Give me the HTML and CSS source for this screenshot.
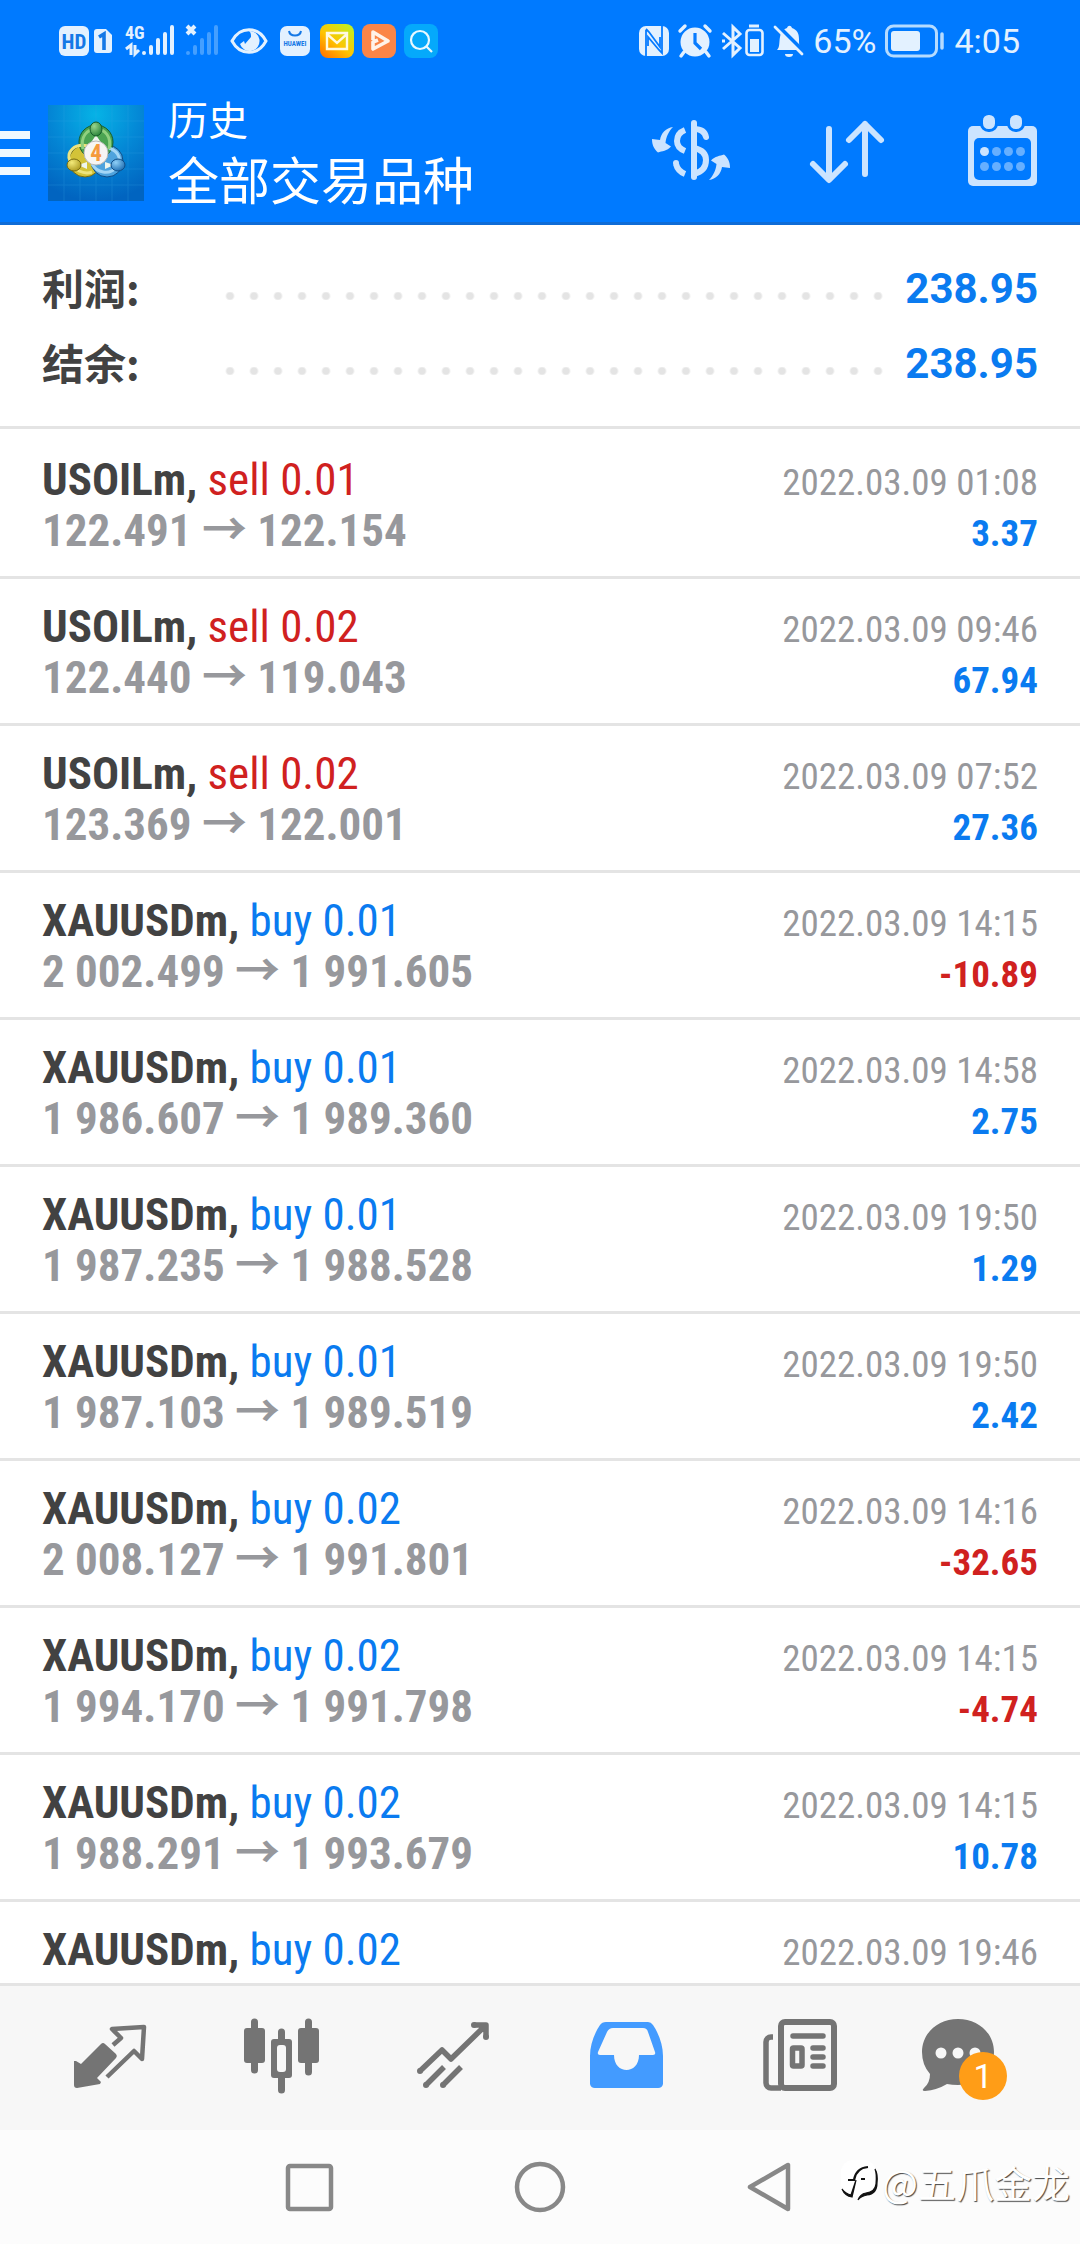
FILE: index.html
```html
<!DOCTYPE html>
<html lang="zh-CN">
<head>
  <meta charset="UTF-8" />
  <meta name="viewport" content="width=device-width, initial-scale=1.0"/>
  <title>历史</title>
  <link rel="stylesheet" href="styles.css">
</head>
<body>
  <div class="status-bar">
    <div class="status-left">
      <!-- HD + SIM 1 -->
      <svg width="56" height="36" viewBox="0 0 56 36">
        <rect x="0" y="3" width="30" height="30" rx="6" fill="#e3f1ff"/>
        <text x="15" y="26" class="svg-bold" font-size="21" text-anchor="middle" fill="#1478e6">HD</text>
        <path d="M38 6h9l6 6v15a3 3 0 0 1-3 3H38a3 3 0 0 1-3-3V9a3 3 0 0 1 3-3z" fill="#e3f1ff"/>
        <path d="M40 14l5-3v16" fill="none" stroke="#1478e6" stroke-width="3.6"/>
      </svg>
      <!-- signal 4G and the empty second SIM -->
      <svg width="95" height="36" viewBox="0 0 95 36">
        <text x="0" y="16" class="svg-bold" font-size="18" fill="#e3f1ff">4G</text>
        <path d="M1 26l5-4v10M10 22v9l4-4" fill="none" stroke="#e3f1ff" stroke-width="3"/>
        <g stroke="#e3f1ff" stroke-width="4" stroke-linecap="round">
          <path d="M19 30v0M26 24v6M33 17v13M40 11v19M47 4v26"/>
          <path d="M62 3l8 8M70 3l-8 8" stroke-linecap="butt"/>
        </g>
        <path d="M63 30v0M70 24v6M77 17v13M84 11v19M91 4v26" stroke="#459fff" stroke-width="4" stroke-linecap="round"/>
      </svg>
      <svg width="38" height="36" viewBox="0 0 38 36">
        <path d="M2 18C10 3 28 3 36 18C28 33 10 33 2 18z" fill="none" stroke="#e3f1ff" stroke-width="3"/>
        <path d="M19 8a10 10 0 1 1-9 13l4-3 1 3 6-7c0-3 0-4-2-6z" fill="#e3f1ff"/>
      </svg>
      <div class="status-apps">
        <svg width="34" height="36" viewBox="0 0 34 36">
          <rect x="2" y="3" width="30" height="30" rx="7" fill="#e3f1ff"/>
          <path d="M11 8c1 6 11 6 12 0" fill="none" stroke="#1478e6" stroke-width="2"/>
          <text x="17" y="23" class="svg-bold" font-size="7" text-anchor="middle" fill="#1478e6">HUAWEI</text>
        </svg>
        <svg width="34" height="36" viewBox="0 0 34 36">
          <defs>
            <linearGradient id="mail" x1="0" y1="1" x2="0.8" y2="0">
              <stop offset="0" stop-color="#ff6a00"/><stop offset="0.5" stop-color="#ffc400"/><stop offset="1" stop-color="#c3ee20"/>
            </linearGradient>
          </defs>
          <rect y="1" width="34" height="34" rx="8" fill="url(#mail)"/>
          <path d="M7 10h20v16H7zM7 11l10 9 10-9" fill="none" stroke="#fff9e0" stroke-width="2.4"/>
        </svg>
        <svg width="34" height="36" viewBox="0 0 34 36">
          <rect y="1" width="34" height="34" rx="8" fill="#fb8547"/>
          <path d="M11 17V9l15 9-15 8v-7l5-2" fill="none" stroke="#fff3ea" stroke-width="3.6" stroke-linejoin="round"/>
        </svg>
        <svg width="34" height="36" viewBox="0 0 34 36">
          <rect y="1" width="34" height="34" rx="8" fill="#05a9fb"/>
          <circle cx="16" cy="17" r="9" fill="none" stroke="#e8f8ff" stroke-width="2.2"/>
          <path d="M22 23l6 6" stroke="#e8f8ff" stroke-width="2.2"/>
        </svg>
      </div>
    </div>
    <div class="status-right">
      <svg width="30" height="36" viewBox="0 0 30 36">
        <rect x="0" y="3" width="30" height="30" rx="7" fill="#e3f1ff"/>
        <path d="M7 33V7M7 6l3 3 11 15V14M23 3v27l-3-3L9 14v9" fill="none" stroke="#067bff" stroke-width="1.8"/>
      </svg>
      <svg width="34" height="36" viewBox="0 0 34 36">
        <circle cx="17" cy="19" r="14.5" fill="#e3f1ff"/>
        <path d="M2 8l5-5M32 8l-5-5M6 29l-3 4M28 29l3 4" stroke="#e3f1ff" stroke-width="3.4" stroke-linecap="round"/>
        <path d="M17 10v10l6 6" fill="none" stroke="#067bff" stroke-width="3.2"/>
      </svg>
      <svg width="44" height="36" viewBox="0 0 44 36">
        <path d="M2 10l17 15-7 7V4l7 7L2 26M1 18h3" fill="none" stroke="#e3f1ff" stroke-width="3"/>
        <path d="M28 3h10" stroke="#e3f1ff" stroke-width="3"/>
        <rect x="25.500" y="7" width="16" height="25" rx="3" fill="none" stroke="#e3f1ff" stroke-width="2.6"/>
        <rect x="29" y="16" width="9" height="13" fill="#e3f1ff"/>
      </svg>
      <svg width="30" height="36" viewBox="0 0 30 36">
        <path d="M3 27c3-3 2-8 3-13 1-6 4-8 7-9 1-3 4-3 5 0 5 2 7 5 7 11 0 5 0 8 3 11z" fill="#e3f1ff"/>
        <path d="M11 31h8a4 3 0 0 1-8 0z" fill="#e3f1ff"/>
        <path d="M3 2l28 28" stroke="#007aff" stroke-width="4"/>
        <path d="M1 4l27 27" stroke="#e3f1ff" stroke-width="2.8" stroke-linecap="round"/>
      </svg>
      <span>65%</span>
      <svg width="60" height="36" viewBox="0 0 60 36">
        <rect x="1.500" y="3" width="50" height="30" rx="7" fill="none" stroke="#b5dbff" stroke-width="3"/>
        <rect x="6" y="8" width="29" height="20" rx="3" fill="#e3f1ff"/>
        <path d="M57 11v14" stroke="#b5dbff" stroke-width="3.500" stroke-linecap="round"/>
      </svg>
      <span>4:05</span>
    </div>
  </div>

  <header class="header">
    <button class="menu" aria-label="菜单"><i></i><i></i><i></i></button>
    <svg class="app-icon" width="96" height="96" viewBox="0 0 96 96">
      <defs>
        <radialGradient id="sky" cx="0.5" cy="0.1" r="0.9">
          <stop offset="0" stop-color="#06b3e6"/><stop offset="0.5" stop-color="#0488d6"/><stop offset="1" stop-color="#0164c0"/>
        </radialGradient>
        <radialGradient id="green" cx="0.35" cy="0.3" r="0.8"><stop offset="0" stop-color="#9bd68d"/><stop offset="1" stop-color="#1f7d33"/></radialGradient>
        <radialGradient id="yellow" cx="0.35" cy="0.3" r="0.8"><stop offset="0" stop-color="#f3ea7a"/><stop offset="1" stop-color="#a8951a"/></radialGradient>
        <radialGradient id="blue" cx="0.35" cy="0.3" r="0.8"><stop offset="0" stop-color="#8fd0f7"/><stop offset="1" stop-color="#1767ad"/></radialGradient>
      </defs>
      <rect width="96" height="96" fill="url(#sky)"/>
      <path d="M16 0v96M32 0v96M48 0v96M64 0v96M80 0v96M0 16h96M0 32h96M0 48h96M0 64h96M0 80h96" stroke="#35a5e6" stroke-width="1" opacity="0.25"/>
      <circle cx="37" cy="56" r="16" fill="#d3c338" stroke="#776a10"/>
      <circle cx="59" cy="56" r="16" fill="#4fa3dd" stroke="#0f4d87"/>
      <circle cx="48" cy="37" r="17" fill="#4ba452" stroke="#165b2b"/>
      <path d="M40 41c-14-3-22 6-18 15 3 9 14 14 22 11" fill="none" stroke="#eee47e" stroke-width="3"/>
      <path d="M61 43c11 4 13 13 7 20-7 7-19 5-24-4" fill="none" stroke="#a3d6f6" stroke-width="3"/>
      <path d="M35 44c-3-12 4-20 13-20s16 8 13 20" fill="none" stroke="#8fd07f" stroke-width="3"/>
      <path d="M48 30l6 9H42zM30 60l9-3v7zM66 60l-9-3v7z" fill="#eef6ee"/>
      <ellipse cx="48" cy="24" rx="6" ry="7" fill="url(#green)" stroke="#165b2b"/>
      <ellipse cx="26" cy="60" rx="7" ry="6" fill="url(#yellow)" stroke="#776a10"/>
      <ellipse cx="70" cy="60" rx="7" ry="6" fill="url(#blue)" stroke="#0f4d87"/>
      <circle cx="48" cy="48" r="12" fill="#f7f5f3" stroke="#b9b9b9"/>
      <text x="48" y="56" class="svg-bold" font-size="23" text-anchor="middle" fill="#f59a3c">4</text>
    </svg>
    <div class="titles">
      <h1>历史</h1>
      <p>全部交易品种</p>
    </div>
    <div class="actions">
      <button aria-label="货币">
        <svg width="80" height="80" viewBox="0 0 80 80" fill="none" stroke="#cce4ff" stroke-width="6">
          <path d="M43 10v54" stroke-linecap="round"/>
          <path d="M43 16c7 0 11 3 12 8" stroke-linecap="round"/>
          <path d="M43 35c9 2 12 7 12 12 0 8-4 12-12 14"/>
          <path d="M34 17c-5 2-8 6-8 11s3 8 8 10"/>
          <path d="M34 61c-5-2-8-6-9-10"/>
          <circle cx="25" cy="50" r="3" fill="#cce4ff" stroke="none"/>
          <g fill="#cce4ff" stroke="none">
            <path d="M22 14C15 15 10 20 9 27L1 26C1 32 3 36 7 39.500C11 38 16 38 20 33.500L14.500 30C15 24 18 18 22 14z"/>
            <path transform="rotate(180 40 40.500)" d="M22 14C15 15 10 20 9 27L1 26C1 32 3 36 7 39.500C11 38 16 38 20 33.500L14.500 30C15 24 18 18 22 14z"/>
          </g>
        </svg>
      </button>
      <button aria-label="排序">
        <svg width="80" height="80" viewBox="0 0 80 80" fill="none" stroke="#cce4ff" stroke-width="6" stroke-linecap="round" stroke-linejoin="round">
          <path d="M22 16v50M6 51l16 16 16-16M58 61V11M42 27l16-16 16 16"/>
        </svg>
      </button>
      <button aria-label="日期">
        <svg width="80" height="80" viewBox="0 0 80 80">
          <rect x="5" y="13" width="69" height="60" rx="5" fill="#cce4ff"/>
          <rect x="11" y="25" width="57" height="42" rx="5" fill="#007aff"/>
          <rect x="18.500" y="0.500" width="15" height="17" rx="7" fill="#cce4ff" stroke="#007aff" stroke-width="3"/>
          <rect x="45.500" y="0.500" width="15" height="17" rx="7" fill="#cce4ff" stroke="#007aff" stroke-width="3"/>
          <circle cx="21.500" cy="38.500" r="4.500" fill="#cce4ff"/>
          <g fill="#66afff">
            <circle cx="33.500" cy="38.500" r="4.500"/><circle cx="45.500" cy="38.500" r="4.500"/><circle cx="57.500" cy="38.500" r="4.500"/>
            <circle cx="21.500" cy="53.500" r="4.500"/><circle cx="33.500" cy="53.500" r="4.500"/><circle cx="45.500" cy="53.500" r="4.500"/><circle cx="57.500" cy="53.500" r="4.500"/>
          </g>
        </svg>
      </button>
    </div>
  </header>

  <section class="summary">
    <div class="summary-row"><span class="label">利润:</span><span class="dots"></span><span class="total">238.95</span></div>
    <div class="summary-row"><span class="label">结余:</span><span class="dots"></span><span class="total">238.95</span></div>
  </section>

  <ul class="deals">
    <li>
      <div><b>USOILm,</b> <span class="sell">sell 0.01</span></div><time>2022.03.09 01:08</time>
      <div class="prices">122.491 → 122.154</div><div class="profit">3.37</div>
    </li>
    <li>
      <div><b>USOILm,</b> <span class="sell">sell 0.02</span></div><time>2022.03.09 09:46</time>
      <div class="prices">122.440 → 119.043</div><div class="profit">67.94</div>
    </li>
    <li>
      <div><b>USOILm,</b> <span class="sell">sell 0.02</span></div><time>2022.03.09 07:52</time>
      <div class="prices">123.369 → 122.001</div><div class="profit">27.36</div>
    </li>
    <li>
      <div><b>XAUUSDm,</b> <span class="buy">buy 0.01</span></div><time>2022.03.09 14:15</time>
      <div class="prices">2 002.499 → 1 991.605</div><div class="profit loss">-10.89</div>
    </li>
    <li>
      <div><b>XAUUSDm,</b> <span class="buy">buy 0.01</span></div><time>2022.03.09 14:58</time>
      <div class="prices">1 986.607 → 1 989.360</div><div class="profit">2.75</div>
    </li>
    <li>
      <div><b>XAUUSDm,</b> <span class="buy">buy 0.01</span></div><time>2022.03.09 19:50</time>
      <div class="prices">1 987.235 → 1 988.528</div><div class="profit">1.29</div>
    </li>
    <li>
      <div><b>XAUUSDm,</b> <span class="buy">buy 0.01</span></div><time>2022.03.09 19:50</time>
      <div class="prices">1 987.103 → 1 989.519</div><div class="profit">2.42</div>
    </li>
    <li>
      <div><b>XAUUSDm,</b> <span class="buy">buy 0.02</span></div><time>2022.03.09 14:16</time>
      <div class="prices">2 008.127 → 1 991.801</div><div class="profit loss">-32.65</div>
    </li>
    <li>
      <div><b>XAUUSDm,</b> <span class="buy">buy 0.02</span></div><time>2022.03.09 14:15</time>
      <div class="prices">1 994.170 → 1 991.798</div><div class="profit loss">-4.74</div>
    </li>
    <li>
      <div><b>XAUUSDm,</b> <span class="buy">buy 0.02</span></div><time>2022.03.09 14:15</time>
      <div class="prices">1 988.291 → 1 993.679</div><div class="profit">10.78</div>
    </li>
    <li>
      <div><b>XAUUSDm,</b> <span class="buy">buy 0.02</span></div><time>2022.03.09 19:46</time>
      <div class="prices">1 991.453 → 1 995.197</div>
    </li>
  </ul>

  <nav class="tabs">
    <button aria-label="行情">
      <svg width="96" height="96" viewBox="0 0 96 96">
        <path d="M51 35l8-7-9-9 32-2-2 32-8-8-27 26" fill="none" stroke="#747474" stroke-width="4.500" stroke-linejoin="round"/>
        <path d="M14 51l5 3 20-20a3 3 0 0 1 4 0l11 10a3 3 0 0 1 0 4L35 68l4 4-1 2-23 4a3 3 0 0 1-3-3V51z" fill="#747474"/>
      </svg>
    </button>
    <button aria-label="图表">
      <svg width="96" height="96" viewBox="0 0 96 96" fill="#747474">
        <path d="M20.500 12v48M74.500 12v50M47.500 22v58" stroke="#747474" stroke-width="7" stroke-linecap="round"/>
        <rect x="10" y="18" width="21" height="35" rx="3"/>
        <rect x="64" y="18" width="21" height="35" rx="3"/>
        <rect x="37" y="29" width="21" height="39" rx="3"/>
        <rect x="43" y="35" width="9" height="27" rx="3" fill="#f7f7f7"/>
      </svg>
    </button>
    <button aria-label="交易">
      <svg width="96" height="96" viewBox="0 0 96 96" fill="none" stroke="#747474" stroke-width="6" stroke-linejoin="round">
        <path d="M14 61l22-21 9 9 35-34M68 15h12v12M20 75l18-18M37 75l18-18" stroke-width="5.500"/>
        <path d="M14 61v0M68 15v0M80 27v0M20 75v0M37 75v0" stroke-linecap="round"/>
      </svg>
    </button>
    <button aria-label="历史">
      <svg width="96" height="96" viewBox="0 0 96 96">
        <path fill-rule="evenodd" fill="#439bff" d="M28 12h42q3 0 5 3c6 9 10 20 10 31v28a5 5 0 0 1-5 4H17a5 5 0 0 1-5-4V46c0-11 4-22 10-31q2-3 6-3zM35 18q-4 0-6 4l-9 20q-1 3 2 3h14c0 20 25 20 25 0h14q3 0 2-3l-7-20q-1-4-5-4z"/>
      </svg>
    </button>
    <button aria-label="新闻">
      <svg width="96" height="96" viewBox="0 0 96 96" fill="none" stroke="#747474">
        <rect x="31" y="12" width="53" height="66" rx="4" stroke-width="6"/>
        <path d="M23 27h-2a5 5 0 0 0-5 5v41a5 5 0 0 0 5 5h10" stroke-width="5.500"/>
        <path d="M43 26h30M63 38h10M63 47h10M63 56h10" stroke-width="5.500" stroke-linecap="round"/>
        <rect x="42.500" y="38" width="9.500" height="18" rx="1" stroke-width="5.500"/>
      </svg>
    </button>
    <button aria-label="消息">
      <span class="chat">
        <svg width="96" height="96" viewBox="0 0 96 96">
          <path d="M36 9c20 0 36 14 36 33S56 75 36 75q-6 0-11-1-10 6-22 7-4 0-1-3 6-5 6-14Q0 55 0 42C0 23 16 9 36 9z" fill="#747474"/>
          <g fill="#f7f7f7"><circle cx="19" cy="43" r="5.500"/><circle cx="36" cy="43" r="5.500"/><circle cx="53" cy="43" r="5.500"/></g>
        </svg>
        <span class="badge">1</span>
      </span>
    </button>
  </nav>

  <div class="system-nav">
    <button aria-label="最近">
      <svg width="54" height="54" viewBox="0 0 54 54"><rect x="5" y="6" width="43" height="43" rx="2" fill="none" stroke="#888" stroke-width="4.500"/></svg>
    </button>
    <button aria-label="主页">
      <svg width="54" height="54" viewBox="0 0 54 54"><circle cx="27" cy="27" r="23" fill="none" stroke="#888" stroke-width="4.500"/></svg>
    </button>
    <button aria-label="返回">
      <svg width="54" height="54" viewBox="0 0 54 54"><path d="M45 5v44L7 27z" fill="none" stroke="#888" stroke-width="4.500" stroke-linejoin="round"/></svg>
    </button>
    <div class="watermark">
      <svg width="38" height="46" viewBox="0 0 38 46">
        <rect x="1" y="1" width="35" height="36" rx="12" fill="#fff"/>
        <path d="M35 10q2 5 1 15-1 8-10 9-6 1-8 7 3-4 9-5 10-1 10-12 1-9-2-14zM2 30q3 7 10 8l4-17-5 15q-5-1-9-6z" fill="#111" stroke="#111" stroke-width="1.200"/>
        <path d="M8 21h6q2-12 14-13M21 20h4" fill="none" stroke="#111" stroke-width="2.200"/>
      </svg>
      <span>@五爪金龙</span>
    </div>
  </div>
</body>
</html>
```
FILE: styles.css
```css
* {
  box-sizing: border-box;
}

body {
  margin: 0;
  height: 100vh;
  display: flex;
  flex-direction: column;
  overflow: hidden;
  background: #fff;
  color: #424242;
  font-family: Roboto, "Noto Sans CJK SC", sans-serif;
}

button {
  padding: 0;
  border: none;
  background: none;
  cursor: pointer;
}

svg {
  display: block;
  overflow: visible;
}

.svg-bold {
  font-family: "Roboto Condensed", Roboto, sans-serif;
  font-weight: 700;
}

/* status bar */
.status-bar {
  display: flex;
  justify-content: space-between;
  align-items: center;
  height: 82px;
  padding: 0 60px 0 59px;
  background: #007aff;
  color: #e3f1ff;
  font-size: 34px;
}

.status-left {
  display: flex;
  align-items: center;
  gap: 10px;
}

.status-right {
  display: flex;
  align-items: center;
  gap: 9px;
}

.status-apps {
  display: flex;
  gap: 8px;
}

/* header */
.header {
  display: flex;
  align-items: center;
  height: 143px;
  padding: 2px 37px 0 0;
  background: #007aff;
  border-bottom: 3px solid #0f6cd6;
  color: #fff;
}

.menu {
  display: flex;
  flex-direction: column;
  gap: 10px;
  width: 30px;
  margin-right: 18px;
}

.menu i {
  height: 8px;
  background: #f0f8ff;
}

.titles {
  flex: 1;
  margin-left: 24px;
  padding-bottom: 4px;
}

.titles h1,
.titles p {
  margin: 0;
  font-family: "Noto Sans CJK SC", sans-serif;
  font-weight: 400;
}

.titles h1 {
  font-size: 40px;
  line-height: 54px;
}

.titles p {
  font-size: 51px;
  line-height: 66px;
}

.actions {
  display: flex;
  gap: 76px;
}

/* totals */
.summary {
  padding: 26px 42px 25px;
  border-bottom: 3px solid #e4e4e4;
}

.summary-row {
  display: flex;
  align-items: center;
  height: 75px;
}

.label {
  width: 176px;
  padding-bottom: 4px;
  font-family: "Noto Sans CJK SC", sans-serif;
  font-size: 42px;
  font-weight: 700;
}

.dots {
  flex: 1;
  height: 8px;
  margin: 14px 18px 0 0;
  background: radial-gradient(circle, #e4e4e4 3px, transparent 5px) repeat-x;
  background-size: 24px 8px;
}

.total {
  color: #0a7bf0;
  font-size: 42px;
  font-weight: 700;
}

/* deals */
.deals {
  flex: 1;
  min-height: 0;
  margin: 0;
  padding: 3px 0 0;
  overflow: hidden;
  list-style: none;
  font-family: "Roboto Condensed", "Noto Sans CJK SC", sans-serif;
  font-size: 45px;
}

.deals li {
  display: grid;
  grid-template-columns: 1fr auto;
  grid-template-rows: 51px 51px;
  align-items: baseline;
  height: 147px;
  padding: 22px 42px 0;
  border-bottom: 3px solid #e4e4e4;
  line-height: 51px;
}

.deals time {
  color: #97989c;
  font-size: 37px;
}

.sell {
  color: #d0211f;
}

.buy {
  color: #0a7bf0;
}

.prices {
  color: #97989c;
  font-weight: 700;
}

.profit {
  color: #0a7bf0;
  font-size: 37px;
  font-weight: 700;
  text-align: right;
}

.loss {
  color: #d0211f;
}

/* bottom tabs */
.tabs {
  display: grid;
  grid-template-columns: repeat(6, 1fr);
  align-items: center;
  justify-items: center;
  height: 147px;
  padding: 0 24px;
  border-top: 3px solid #e4e4e4;
  background: #f7f7f7;
}

.chat {
  display: block;
  position: relative;
}

.badge {
  position: absolute;
  left: 37px;
  top: 42px;
  width: 48px;
  height: 48px;
  border-radius: 50%;
  background: #ff9d17;
  color: #fff;
  font-family: Roboto, sans-serif;
  font-size: 34px;
  line-height: 48px;
  text-align: center;
}

.system-nav {
  display: flex;
  align-items: center;
  justify-content: center;
  gap: 176px;
  position: relative;
  height: 114px;
  background: #fcfcfc;
}

.watermark {
  position: absolute;
  right: 10px;
  bottom: 34px;
  display: flex;
  align-items: center;
  gap: 4px;
  color: #fff;
  font-family: "Noto Sans CJK SC", sans-serif;
  font-size: 38px;
  line-height: 56px;
  text-shadow: 1px 1px 1px #444;
}
```
